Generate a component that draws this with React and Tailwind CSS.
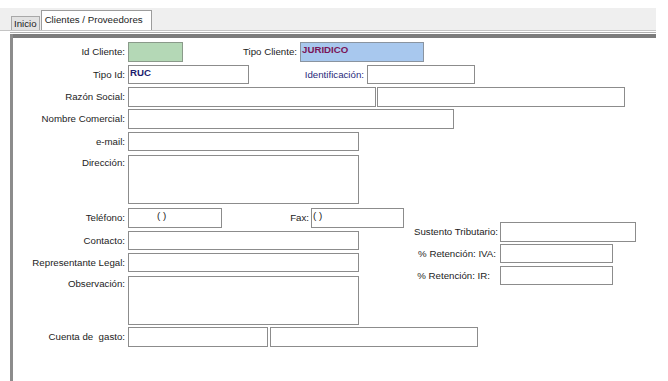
import React from 'react';

const Label = ({ children, className = '' }) => (
  <div className={`shrink-0 text-right whitespace-pre leading-none ${className}`}>{children}</div>
);

const Field = ({ className = '', bg = 'bg-white border-[#8c8c8c]', children }) => (
  <div className={`shrink-0 border leading-none ${bg} ${className}`}>{children}</div>
);

const App = () => {
  return (
    <div className="w-[668px] h-[381px] bg-white overflow-hidden text-[9.7px] text-[#1c1c1c]" style={{ fontFamily: '"Liberation Sans", Arial, sans-serif' }}>
      <div className="h-[8px]" />

      {/* pestañas */}
      <div className="flex items-end h-[22px] w-[656px] bg-[#efefef] pl-[11px]">
        <div className="h-[14px] px-[2px] pt-[2px] bg-[#e2e2e2] border border-b-0 border-[#a8a8a8] text-[9.7px] leading-none">Inicio</div>
        <div className="h-[20px] ml-[1px] w-[111px] pl-[3px] pt-[4px] bg-white border border-b-0 border-[#9c9c9c] text-[9.7px] leading-none">Clientes / Proveedores</div>
      </div>

      {/* panel */}
      <div className="w-[656px] border-t border-[#c4c4c4]">
        <div className="border-t border-[#b0b0b0] mt-[1px] ml-[10px]" />
        <div className="ml-[10px] border-l-[3px] border-[#8c8c8c] h-[350px]">
          <div className="border-t-[4px] border-[#7c7c7c] mt-[1px]" />
          <div className="pt-[4px] flex flex-col">

            <div className="flex items-center h-[20px]">
              <Label className="w-[115px] pr-[3px]">Id Cliente:</Label>
              <Field bg="bg-[#b4d8b6] border-[#8a9a8a]" className="w-[55px] h-[20px]" />
              <Label className="w-[117px] pr-[3px]">Tipo Cliente:</Label>
              <Field bg="bg-[#a8c8ee] border-[#8a94a0]" className="w-[124px] h-[20px] pl-[1px] pt-[2px] font-bold text-[#7a1458]">JURIDICO</Field>
            </div>

            <div className="flex items-center h-[19px] mt-[3px]">
              <Label className="w-[115px] pr-[3px]">Tipo Id:</Label>
              <Field className="w-[121px] h-[19px] pl-[1px] pt-[2px] font-bold text-[#1c1c6e]">RUC</Field>
              <Label className="w-[118px] pr-[3px] text-[#2a2a7a]">Identificación:</Label>
              <Field className="w-[108px] h-[19px]" />
            </div>

            <div className="flex items-center h-[20px] mt-[3px]">
              <Label className="w-[115px] pr-[3px]">Razón Social:</Label>
              <Field className="w-[248px] h-[20px]" />
              <Field className="w-[248px] h-[20px] ml-[1px]" />
            </div>

            <div className="flex items-center h-[20px] mt-[2px]">
              <Label className="w-[115px] pr-[3px]">Nombre Comercial:</Label>
              <Field className="w-[326px] h-[20px]" />
            </div>

            <div className="flex items-center h-[19px] mt-[3px]">
              <Label className="w-[115px] pr-[3px]">e-mail:</Label>
              <Field className="w-[231px] h-[19px]" />
            </div>

            <div className="flex items-start h-[49px] mt-[4px]">
              <Label className="w-[115px] pr-[3px] pt-[3px]">Dirección:</Label>
              <Field className="w-[231px] h-[49px]" />
            </div>

            <div className="flex items-start mt-[4px]">
              <div className="flex flex-col w-[391px]">
                <div className="flex items-center h-[20px]">
                  <Label className="w-[115px] pr-[3px]">Teléfono:</Label>
                  <Field className="w-[94px] h-[20px] pl-[28px] pt-[2px]">( )</Field>
                  <Label className="w-[89px] pr-[2px]">Fax:</Label>
                  <Field className="w-[93px] h-[20px] pl-[1px] pt-[2px]">( )</Field>
                </div>
                <div className="flex items-center h-[19px] mt-[3px]">
                  <Label className="w-[115px] pr-[3px]">Contacto:</Label>
                  <Field className="w-[231px] h-[19px]" />
                </div>
                <div className="flex items-center h-[19px] mt-[3px]">
                  <Label className="w-[115px] pr-[3px]">Representante Legal:</Label>
                  <Field className="w-[231px] h-[19px]" />
                </div>
                <div className="flex items-start h-[49px] mt-[4px]">
                  <Label className="w-[115px] pr-[3px] pt-[3px]">Observación:</Label>
                  <Field className="w-[231px] h-[49px]" />
                </div>
              </div>

              <div className="flex flex-col mt-[14px]">
                <div className="flex items-center h-[20px]">
                  <Label className="w-[96px] pr-[2px]">Sustento Tributario:</Label>
                  <Field className="w-[136px] h-[20px]" />
                </div>
                <div className="flex items-center h-[19px] mt-[2px]">
                  <Label className="w-[96px] pr-[4px]">% Retención: IVA:</Label>
                  <Field className="w-[113px] h-[19px]" />
                </div>
                <div className="flex items-center h-[19px] mt-[3px]">
                  <Label className="w-[96px] pr-[10px]">% Retención: IR:</Label>
                  <Field className="w-[113px] h-[19px]" />
                </div>
              </div>
            </div>

            <div className="flex items-center h-[20px] mt-[2px]">
              <Label className="w-[115px] pr-[3px]">{'Cuenta de  gasto:'}</Label>
              <Field className="w-[140px] h-[20px]" />
              <Field className="w-[208px] h-[20px] ml-[2px]" />
            </div>

          </div>
        </div>
      </div>
    </div>
  );
};

export default App;
